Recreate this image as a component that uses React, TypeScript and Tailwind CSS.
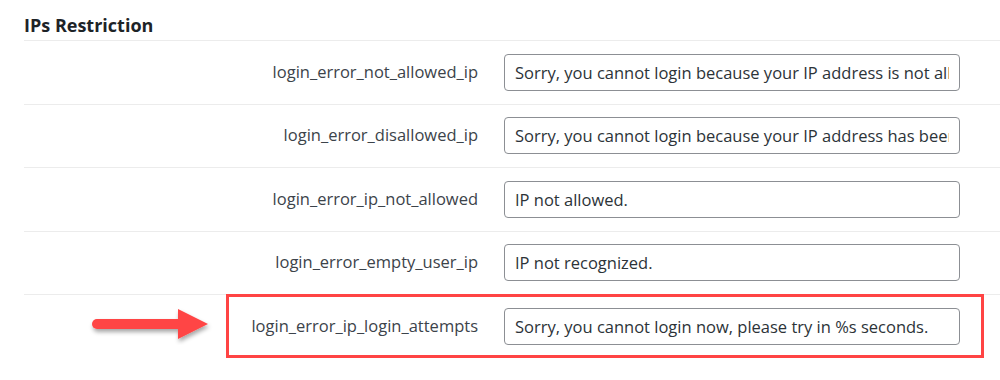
import React from 'react';

interface Row {
    name: string;
    value: string;
    highlight?: boolean;
}

const rows: Row[] = [
    { name: 'login_error_not_allowed_ip', value: 'Sorry, you cannot login because your IP address is not allowed to access this site.' },
    { name: 'login_error_disallowed_ip', value: 'Sorry, you cannot login because your IP address has been disallowed.' },
    { name: 'login_error_ip_not_allowed', value: 'IP not allowed.' },
    { name: 'login_error_empty_user_ip', value: 'IP not recognized.' },
    { name: 'login_error_ip_login_attempts', value: 'Sorry, you cannot login now, please try in %s seconds.', highlight: true },
];

const Arrow: React.FC = () => (
    <svg className="absolute left-[64px] top-[10px]" width="128" height="40" viewBox="0 0 128 40">
        <defs>
            <filter id="arrowShadow" x="-20%" y="-40%" width="140%" height="200%">
                <feDropShadow dx="1" dy="3" stdDeviation="2" floodColor="#000" floodOpacity="0.35" />
            </filter>
        </defs>
        <g filter="url(#arrowShadow)">
            <line x1="9" y1="19" x2="94" y2="19" stroke="#ff4444" strokeWidth="10" strokeLinecap="round" />
            <polygon points="90,4 120,19 90,34" fill="#ff4444" />
        </g>
    </svg>
);

const App: React.FC = () => {
    return (
        <div className="w-[1000px] h-[380px] bg-white overflow-hidden font-['Open_Sans','Noto_Sans',sans-serif] text-[#2c3338]">
            <div className="pl-6">
                <h2 className="h-10 pt-[13px] text-[18px] leading-[24px] font-bold text-[#1d2327]">IPs Restriction</h2>

                {rows.map(row => (
                    <div key={row.name} className="relative flex items-center h-[63.5px] border-t border-[#ececec]">
                        <label className="w-[454px] text-right text-[16.5px] text-[#3c434a]">{row.name}</label>
                        <input
                            type="text"
                            readOnly
                            value={row.value}
                            className="ml-[26px] w-[456px] h-[37px] px-[10px] border border-[#8c8f94] rounded-[4px] text-[16.5px] text-[#2c3338] bg-white outline-none"
                        />

                        {/* annotation: box + arrow around the last row */}
                        {row.highlight && (
                            <>
                                <div className="absolute left-[202px] right-[16px] top-[-1px] h-[64px] border-[3px] border-[#ff4444] pointer-events-none"></div>
                                <Arrow />
                            </>
                        )}
                    </div>
                ))}
            </div>
        </div>
    );
};

export default App;
